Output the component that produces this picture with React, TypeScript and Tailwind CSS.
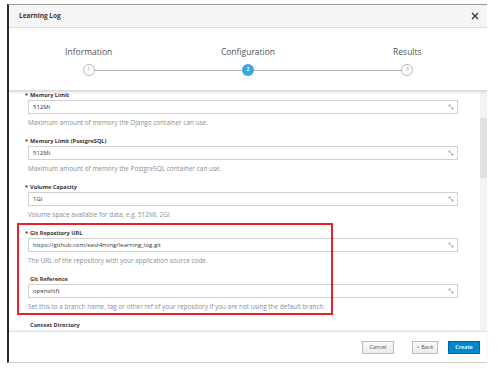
import React from 'react';

const fields = [
  { label: 'Memory Limit', required: true, value: '512Mi', help: 'Maximum amount of memory the Django container can use.' },
  { label: 'Memory Limit (PostgreSQL)', required: true, value: '512Mi', help: 'Maximum amount of memory the PostgreSQL container can use.' },
  { label: 'Volume Capacity', required: true, value: '1Gi', help: 'Volume space available for data, e.g. 512Mi, 2Gi' },
  { label: 'Git Repository URL', required: true, value: 'https://github.com/east4ming/learning_log.git', help: 'The URL of the repository with your application source code.' },
  { label: 'Git Reference', required: false, value: 'openshift', help: 'Set this to a branch name, tag or other ref of your repository if you are not using the default branch.' },
  { label: 'Context Directory', required: false, value: '', help: '' },
];

const steps = ['Information', 'Configuration', 'Results'];

function Grip() {
  return (
    <svg width="6" height="6" viewBox="0 0 6 6" className="shrink-0">
      <path d="M1 1 L5 5" stroke="#9a9a9a" strokeWidth="0.8" />
      <path d="M1 1 L2.6 1 M1 1 L1 2.6 M5 5 L3.4 5 M5 5 L5 3.4" stroke="#9a9a9a" strokeWidth="0.8" />
    </svg>
  );
}

export default function App() {
  return (
    <div className="w-[500px] h-[369px] bg-white pt-[4px] font-['Open_Sans',sans-serif] text-[#363636] overflow-hidden">
      <div className="ml-[7px] w-[480px] h-[359px] border-l-[2px] border-l-[#2a2a2a] border-t border-t-[#9a9a9a] border-b border-b-[#cfcfcf] flex flex-col">
        {/* header */}
        <div className="h-[23px] shrink-0 bg-[#f5f5f5] border-b border-[#dcdcdc] flex items-center justify-between pl-[10px] pr-[8px]">
          <span className="text-[6.5px] font-bold">Learning Log</span>
          <svg width="8" height="8" viewBox="0 0 8 8">
            <path d="M1 1 L7 7 M7 1 L1 7" stroke="#333" strokeWidth="1.3" />
          </svg>
        </div>

        {/* steps */}
        <div className="h-[62px] shrink-0 bg-white grid grid-cols-3 pt-[19px]">
          {steps.map((s, i) => (
            <div key={s} className="flex flex-col items-center">
              <div className="h-[10px] leading-[10px] text-[8.5px] text-[#4d5258]">{s}</div>
              <div className="mt-[7px] w-full flex items-center">
                <div className={`flex-1 h-px ${i === 0 ? 'bg-transparent' : 'bg-[#bbbbbb]'}`} />
                {i === 1 ? (
                  <div className="w-[12px] h-[12px] rounded-full bg-[#39a5dc] flex items-center justify-center text-[5px] font-bold text-white">
                    2
                  </div>
                ) : (
                  <div className="w-[12px] h-[12px] rounded-full bg-white border border-[#bbbbbb] flex items-center justify-center text-[5px] text-[#8b8d8f]">
                    {i + 1}
                  </div>
                )}
                <div className={`flex-1 h-px ${i === 2 ? 'bg-transparent' : 'bg-[#bbbbbb]'}`} />
              </div>
            </div>
          ))}
        </div>

        {/* body */}
        <div className="h-[241px] shrink-0 flex relative">
          <div className="absolute left-0 right-0 top-0 h-[4px] bg-gradient-to-b from-[#d6d6d6] to-transparent" />
          <div className="flex-1 overflow-hidden pl-[19px] pr-[22px] pt-[1px] relative">
            <div className="flex flex-col gap-[10px]">
              {fields.map((f) => (
                <div key={f.label} className="flex flex-col">
                  <div className="h-[8px] leading-[8px] text-[5.6px] font-bold -ml-[3px]">
                    {f.required ? <span className="mr-[2px]">*</span> : <span className="mr-[2px] invisible">*</span>}
                    {f.label}
                  </div>
                  {f.label !== 'Context Directory' && (
                    <>
                      <div className="mt-[1px] h-[14px] border border-[#d1d1d1] bg-white flex items-center justify-between pl-[4px] pr-[3px]">
                        <span className="text-[6px] text-[#363636]">{f.value}</span>
                        <Grip />
                      </div>
                      <div className="mt-[5px] h-[8px] leading-[8px] text-[6.4px] text-[#8b8d8f] whitespace-nowrap">{f.help}</div>
                    </>
                  )}
                </div>
              ))}
            </div>
            {/* annotation box */}
            <div className="absolute left-[8px] top-[133px] w-[316px] h-[92px] border-[2px] border-[#e8202a]" />
          </div>
          <div className="w-[7px] bg-[#f4f4f4] shrink-0">
            <div className="mt-[28px] h-[60px] bg-[#e1e1e1]" />
          </div>
        </div>

        {/* footer */}
        <div className="flex-1 bg-white border-t border-[#e2e2e2] shadow-[0_-1px_2px_rgba(0,0,0,0.08)] flex items-center justify-end pr-[7px]">
          <button className="h-[13px] w-[32px] border border-[#bbbbbb] bg-gradient-to-b from-[#fafafa] to-[#ececec] text-[5.5px] text-[#4d5258]">
            Cancel
          </button>
          <button className="ml-[18px] h-[13px] w-[26px] border border-[#bbbbbb] bg-gradient-to-b from-[#fafafa] to-[#ececec] text-[5.5px] text-[#4d5258]">
            &lt; Back
          </button>
          <button className="ml-[10px] h-[13px] w-[32px] border border-[#00659c] bg-[#0088ce] text-[5.5px] font-semibold text-white">
            Create
          </button>
        </div>
      </div>
    </div>
  );
}
